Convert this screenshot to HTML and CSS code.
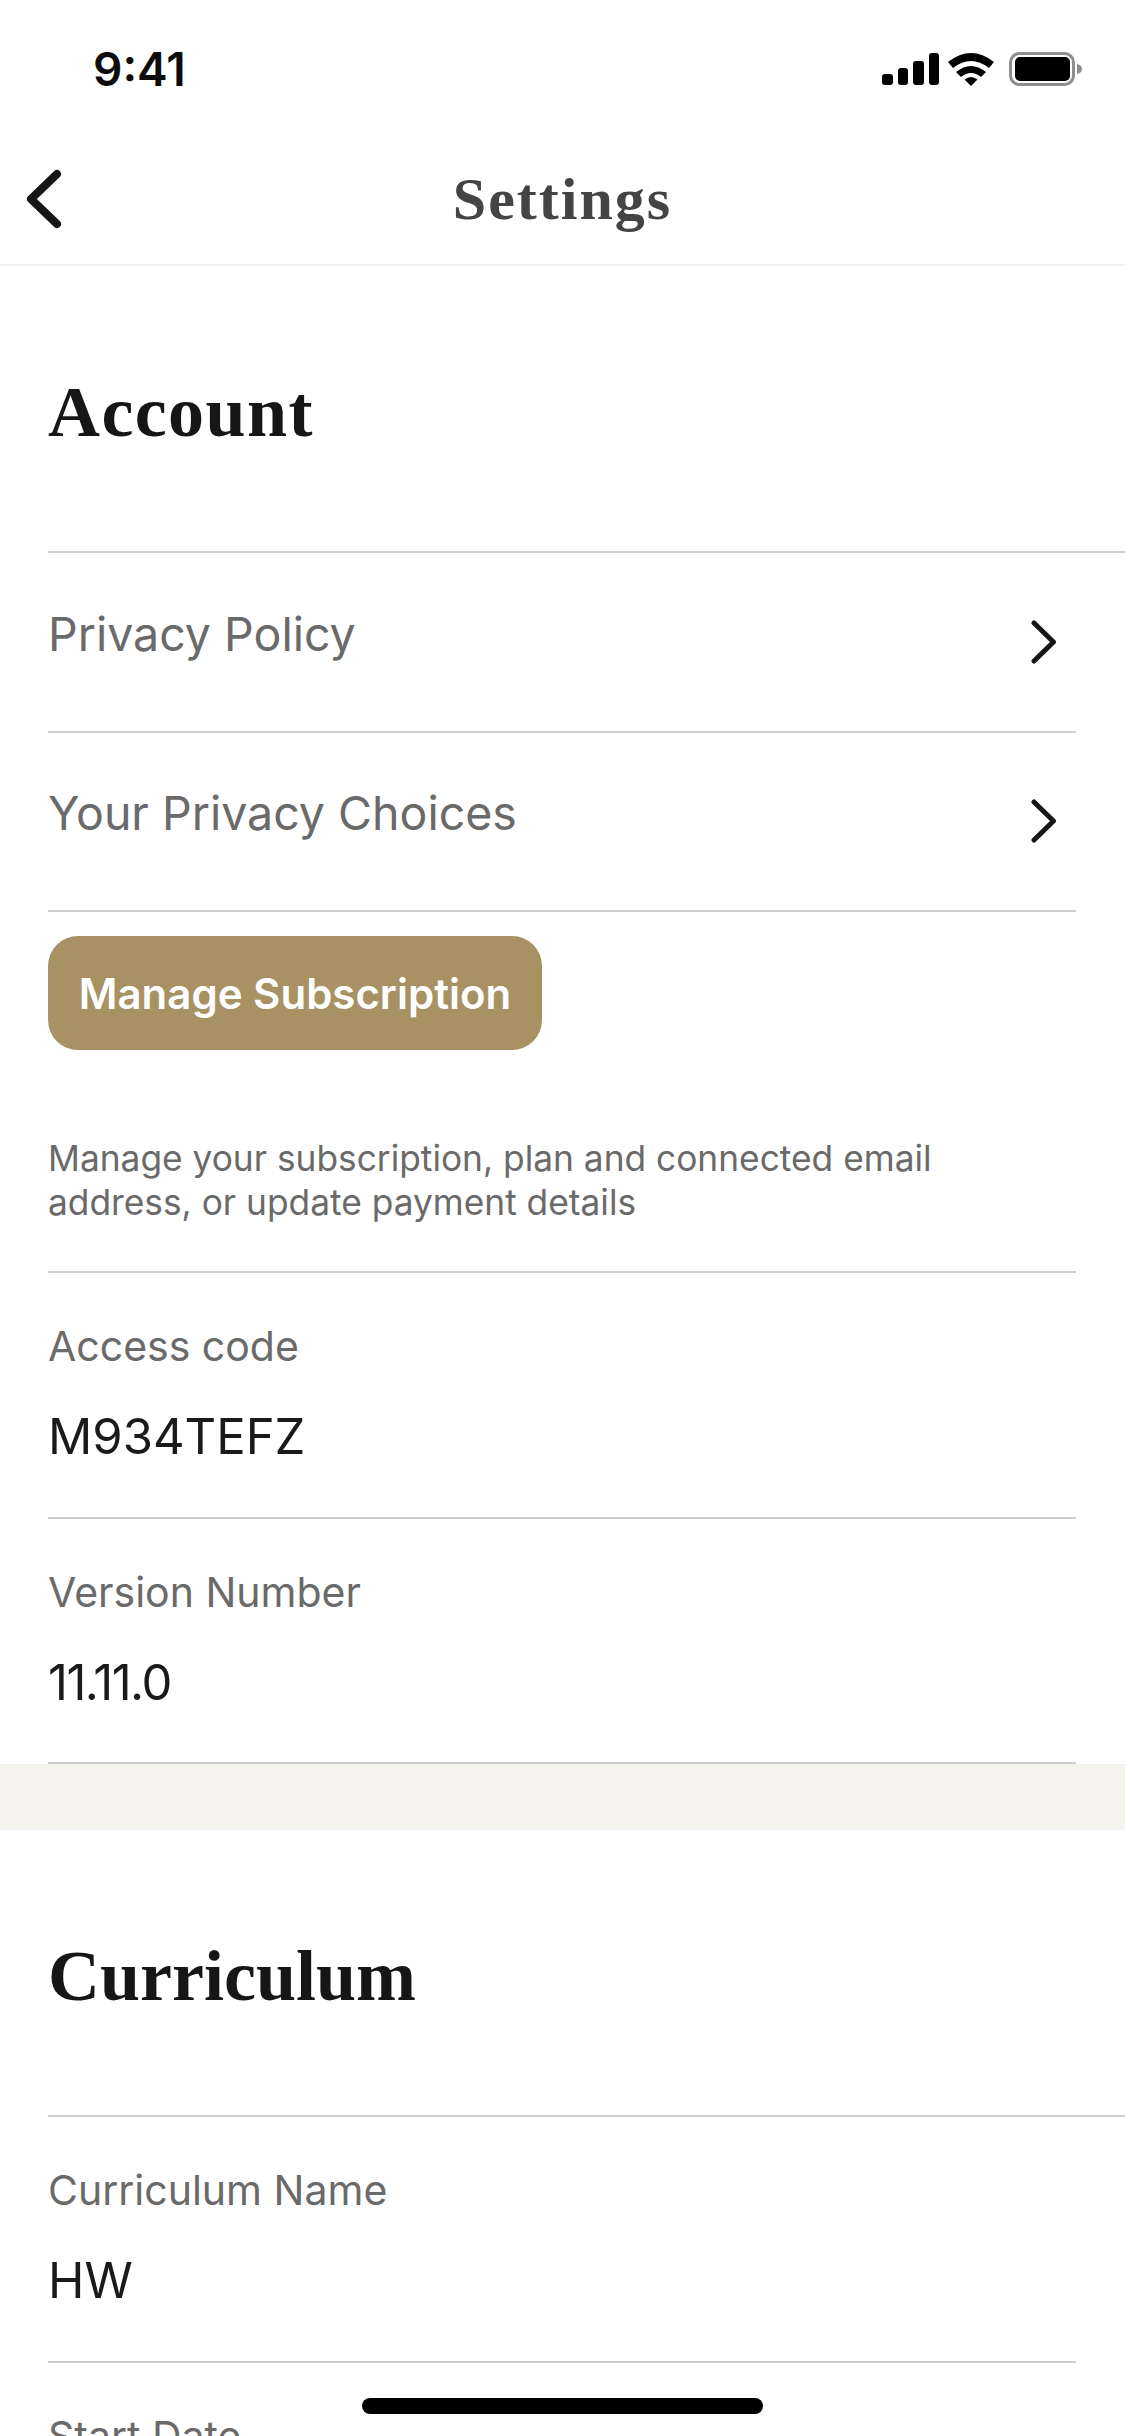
FILE: index.html
```html
<!DOCTYPE html>
<html lang="en">

<head>
  <meta charset="UTF-8">
  <meta name="viewport" content="width=device-width, initial-scale=1.0">
  <title>Settings</title>

  <link rel="stylesheet" href="styles.css">
</head>

<body>
  <section id="container">
    <div class="status-bar">
      <span class="status-time">9:41</span>
      <svg class="status-icons" width="204" height="35" viewBox="0 0 204 35">
        <rect x="2" y="22" width="11" height="11" rx="3" />
        <rect x="18" y="16" width="10" height="17" rx="3" />
        <rect x="33" y="9" width="11" height="24" rx="3" />
        <rect x="49" y="1" width="10" height="32" rx="3" />
        <path d="M68 10 Q91 -8 114 10 L109 16 Q91 2 73 16 Z" />
        <path d="M76 20 Q91 8 106 20 L101 25 Q91 17 81 25 Z" />
        <path d="M84.500 27.500 Q91 22.500 97.500 27.500 L91 34 Z" />
        <rect class="battery-case" x="130.500" y="1.500" width="63" height="31" rx="9" />
        <rect x="135" y="5" width="55" height="24" rx="5" />
        <path class="battery-cap" d="M197 12 Q202 13 202 17 Q202 21 197 22 Z" />
      </svg>
    </div>

    <header class="nav-bar">
      <svg class="back-icon" width="36" height="60" viewBox="0 0 36 60">
        <path d="M31 5 L5 30 L31 55" />
      </svg>
      <h1 class="nav-title">Settings</h1>
    </header>

    <div class="section">
      <h2 class="section-title account">Account</h2>
      <div class="row-list">
        <div class="link-row first">
          <span>Privacy Policy</span>
          <svg class="chevron" width="26" height="44" viewBox="0 0 26 44">
            <path d="M3 3 L22.500 22 L3 41" />
          </svg>
        </div>
        <div class="link-row">
          <span>Your Privacy Choices</span>
          <svg class="chevron" width="26" height="44" viewBox="0 0 26 44">
            <path d="M3 3 L22.500 22 L3 41" />
          </svg>
        </div>
        <div class="manage-row">
          <button class="manage-btn">Manage Subscription</button>
          <p class="manage-note">Manage your subscription, plan and connected email address, or update payment details</p>
        </div>
        <div class="info-row">
          <p class="info-label">Access code</p>
          <p class="info-value">M934TEFZ</p>
        </div>
        <div class="info-row last">
          <p class="info-label">Version Number</p>
          <p class="info-value tight">11.11.0</p>
        </div>
      </div>
    </div>

    <div class="section-gap"></div>

    <div class="section">
      <h2 class="section-title">Curriculum</h2>
      <div class="row-list">
        <div class="info-row first">
          <p class="info-label">Curriculum Name</p>
          <p class="info-value">HW</p>
        </div>
        <div class="info-row">
          <p class="info-label">Start Date</p>
        </div>
      </div>
    </div>

    <div class="home-indicator"></div>
  </section>
</body>

</html>
```

FILE: styles.css
```css
* {
  margin: 0;
  padding: 0;
  box-sizing: border-box;
}

body {
  background-color: #fff;
  font-family: "Inter", "Liberation Sans", sans-serif;
}

#container {
  width: 1125px;
  height: 2436px;
  overflow: hidden;
  position: relative;
  background-color: #fff;
}

.status-bar {
  height: 106px;
  display: flex;
  justify-content: space-between;
  align-items: flex-start;
  padding: 49px 41px 0 93px;
}

.status-time {
  font-size: 46px;
  line-height: 40px;
  font-weight: 600;
  color: #0c0c0c;
}

.status-icons {
  fill: #000;
  margin-top: 3px;
}

.battery-case {
  fill: none;
  stroke: #8e8e8e;
  stroke-width: 3;
}

.battery-cap {
  fill: #8e8e8e;
}

.nav-bar {
  height: 160px;
  padding-top: 28px;
  display: flex;
  align-items: center;
  justify-content: center;
  position: relative;
  border-bottom: 2px solid #f3f2ef;
}

.back-icon {
  position: absolute;
  left: 26px;
  top: 63px;
  fill: none;
  stroke: #161616;
  stroke-width: 8;
  stroke-linecap: round;
  stroke-linejoin: round;
}

.nav-title {
  font-family: "Liberation Serif", serif;
  font-size: 60px;
  font-weight: 700;
  letter-spacing: 2px;
  color: #444;
}

.section {
  padding-left: 48px;
}

.section-title {
  height: 285px;
  padding-top: 7px;
  display: flex;
  align-items: center;
  font-family: "Liberation Serif", serif;
  font-size: 72px;
  font-weight: 700;
  color: #161616;
}

.section-title.account {
  letter-spacing: 1.400px;
}

.row-list > * {
  margin-right: 49px;
  border-top: 2px solid #d0cecb;
}

.row-list > .first {
  margin-right: 0;
}

.row-list > .last {
  height: 247px;
  border-bottom: 2px solid #d0cecb;
}

.link-row {
  height: 179.500px;
  display: flex;
  justify-content: space-between;
  align-items: center;
  font-size: 46.500px;
  color: #6a6a6a;
  padding-right: 19px;
}

.link-row.first {
  padding-right: 68px;
}

.link-row span {
  margin-top: -16px;
}

.chevron {
  fill: none;
  stroke: #161616;
  stroke-width: 5;
  stroke-linecap: round;
  stroke-linejoin: round;
}

.manage-row {
  height: 361px;
  padding-top: 24px;
}

.manage-btn {
  display: block;
  width: 494px;
  height: 114px;
  background-color: #a89162;
  border: none;
  border-radius: 30px;
  font-family: inherit;
  font-size: 42px;
  font-weight: 600;
  color: #fff;
}

.manage-note {
  margin-top: 87px;
  font-size: 35.300px;
  line-height: 44px;
  color: #6a6a6a;
}

.info-row {
  height: 246px;
  padding-top: 48px;
}

.info-label {
  font-size: 41px;
  line-height: 50px;
  color: #6a6a6a;
}

.info-value {
  margin-top: 41px;
  font-size: 49px;
  line-height: 50px;
  color: #1a1a1a;
}

.info-value.tight {
  letter-spacing: -1.500px;
}

.section-gap {
  height: 66px;
  background-color: #f4f3ee;
}

.home-indicator {
  position: absolute;
  left: 362px;
  bottom: 22px;
  width: 401px;
  height: 16px;
  border-radius: 8px;
  background-color: #000;
}
```
